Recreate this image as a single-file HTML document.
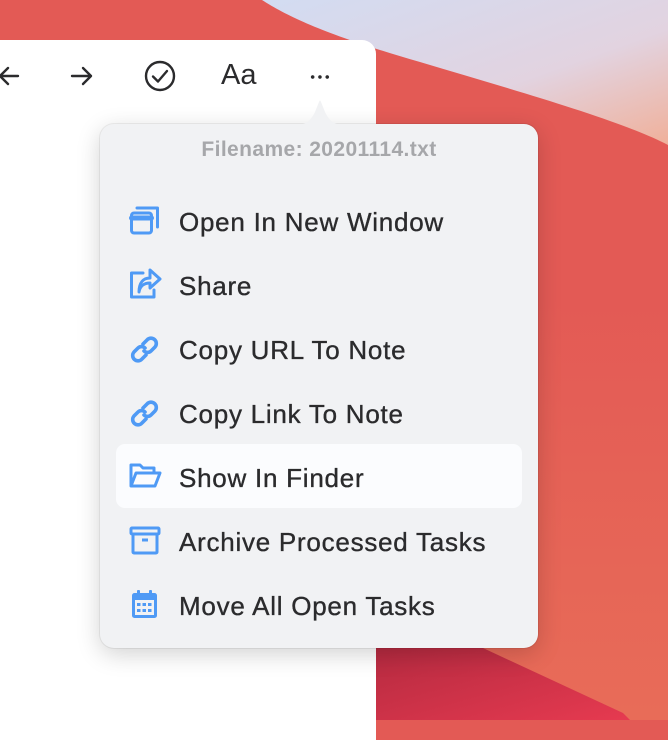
<!DOCTYPE html>
<html><head><style>
body{margin:0;width:668px;height:720px;overflow:hidden;position:relative;font-family:"Liberation Sans",sans-serif;background:#e35a55}
.bg{position:absolute;left:0;top:0}
.panel{position:absolute;left:0;top:40px;width:376px;height:700px;background:#fff;border-top-right-radius:14px}
.menu{position:absolute;left:100px;top:124px;width:438px;height:524px;background:#f1f2f4;border-radius:14px;box-shadow:0 6px 24px rgba(0,0,0,.18),0 0 0 1px rgba(0,0,0,.06)}
.fn{position:absolute;top:138px;left:100px;width:438px;text-align:center;color:#a6a7aa;font-size:21px;letter-spacing:.4px;font-weight:bold}
.item{position:absolute;left:179px;font-size:26px;letter-spacing:.75px;color:#2b2b2d;line-height:30px;-webkit-text-stroke:.35px #2b2b2d}
.hl{position:absolute;left:116px;top:444px;width:406px;height:64px;background:#fbfcfe;border-radius:9px}
.ic{position:absolute;left:128px}
</style></head><body>
<svg class="bg" width="668" height="720">
<defs>
<linearGradient id="b" x1="0" y1="0" x2="1" y2="1"><stop offset="0" stop-color="#d2dcf2"/><stop offset="0.6" stop-color="#e2d3e0"/><stop offset="1" stop-color="#f0b09a"/></linearGradient>
<linearGradient id="r" x1="0" y1="0" x2="1" y2="1"><stop offset="0" stop-color="#b52a40"/><stop offset="1" stop-color="#e63a50"/></linearGradient>
<linearGradient id="o" x1="0" y1="0" x2="0" y2="1"><stop offset="0" stop-color="#e35a55"/><stop offset="1" stop-color="#e86c58"/></linearGradient>
</defs>
<rect x="376" y="300" width="292" height="420" fill="url(#o)"/>
<path d="M262 0 C290 18 330 36 420 62 C520 92 620 120 668 145 L668 0Z" fill="url(#b)"/>
<path d="M376 648 L483 648 L623 713 L630 720 L376 720Z" fill="url(#r)"/>
</svg>
<div class="panel"></div>
<svg style="position:absolute;left:0;top:60px" width="360" height="36" fill="none" stroke="#2b2b2d" stroke-width="2.4" stroke-linecap="round" stroke-linejoin="round">
<path d="M18 16 H0 M8 8 L0 16 L8 24"/>
<path d="M72 16 H91 M83 8 L91 16 L83 24"/>
<circle cx="160" cy="16" r="14"/>
<path d="M153 16.5 L158 21.5 L167 11"/>
</svg>
<div style="position:absolute;left:221px;top:59px;font-size:29px;color:#2b2b2d">Aa</div>
<div style="position:absolute;left:309px;top:75px;width:22px;height:4px;background:radial-gradient(circle,#2b2b2d 1.6px,transparent 2px) 0 0/7.3px 4px"></div>
<div class="menu"></div>
<svg style="position:absolute;left:295px;top:98px" width="50" height="28"><path d="M0 27 C12 27 16 22 20 14 L24 4 Q25 1 26 4 L30 14 C34 22 38 27 50 27Z" fill="#f1f2f4"/></svg>
<div class="fn">Filename: 20201114.txt</div>
<div class="hl"></div>
<div class="item" style="top:207px">Open In New Window</div>
<div class="item" style="top:271px">Share</div>
<div class="item" style="top:335px">Copy URL To Note</div>
<div class="item" style="top:399px">Copy Link To Note</div>
<div class="item" style="top:463px">Show In Finder</div>
<div class="item" style="top:527px">Archive Processed Tasks</div>
<div class="item" style="top:591px">Move All Open Tasks</div>
<svg class="ic" style="top:203px" width="34" height="34" fill="none" stroke="#4f9af5" stroke-width="3" stroke-linejoin="round" stroke-linecap="round">
<rect x="3.5" y="10" width="20" height="20" rx="2.5"/><path d="M3.5 15 H23.5" stroke-width="5"/><path d="M9 5 H29.5 V24"/>
</svg>
<svg class="ic" style="top:266px" width="34" height="36" fill="none" stroke="#4f9af5" stroke-width="3" stroke-linejoin="round" stroke-linecap="round">
<path d="M15 7 H3.5 V31 H26 V24"/><path d="M22 4 L32 13 L22 22 V17 C16 17 12 20 11 26 C11 17 15 12 22 12Z"/>
</svg>
<svg class="ic" style="top:333px" width="34" height="34" fill="none" stroke="#4f9af5" stroke-width="3.6" stroke-linecap="round">
<path d="M15 11 L19 7 A5 5 0 0 1 27 14 L23 18 A5 5 0 0 1 16 18"/><path d="M18 22 L14 26 A5 5 0 0 1 6 19 L10 15 A5 5 0 0 1 17 15"/>
</svg>
<svg class="ic" style="top:397px" width="34" height="34" fill="none" stroke="#4f9af5" stroke-width="3.6" stroke-linecap="round">
<path d="M15 11 L19 7 A5 5 0 0 1 27 14 L23 18 A5 5 0 0 1 16 18"/><path d="M18 22 L14 26 A5 5 0 0 1 6 19 L10 15 A5 5 0 0 1 17 15"/>
</svg>
<svg class="ic" style="top:460px" width="36" height="34" fill="none" stroke="#4f9af5" stroke-width="3" stroke-linejoin="round">
<path d="M3 26 V5 H12 L15 8 H26 V13"/><path d="M3 26 L8 13 H32 L27 26Z"/>
</svg>
<svg class="ic" style="top:524px" width="34" height="34" fill="none" stroke="#4f9af5" stroke-width="3" stroke-linejoin="round">
<rect x="3" y="4" width="28" height="6" rx="1"/><rect x="5" y="10" width="24" height="19" rx="1"/><path d="M14 16 H20"/>
</svg>
<svg class="ic" style="top:588px" width="34" height="34">
<rect x="4" y="5" width="25" height="25" rx="2.5" fill="#4f9af5"/><rect x="7" y="12" width="19" height="15" fill="#f1f2f4"/>
<rect x="9" y="2" width="3" height="6" rx="1" fill="#4f9af5"/><rect x="21" y="2" width="3" height="6" rx="1" fill="#4f9af5"/>
<g fill="#4f9af5"><rect x="9" y="15" width="3.5" height="3"/><rect x="14.5" y="15" width="3.5" height="3"/><rect x="20" y="15" width="3.5" height="3"/><rect x="9" y="21" width="3.5" height="3"/><rect x="14.5" y="21" width="3.5" height="3"/><rect x="20" y="21" width="3.5" height="3"/></g>
</svg>
</body></html>
